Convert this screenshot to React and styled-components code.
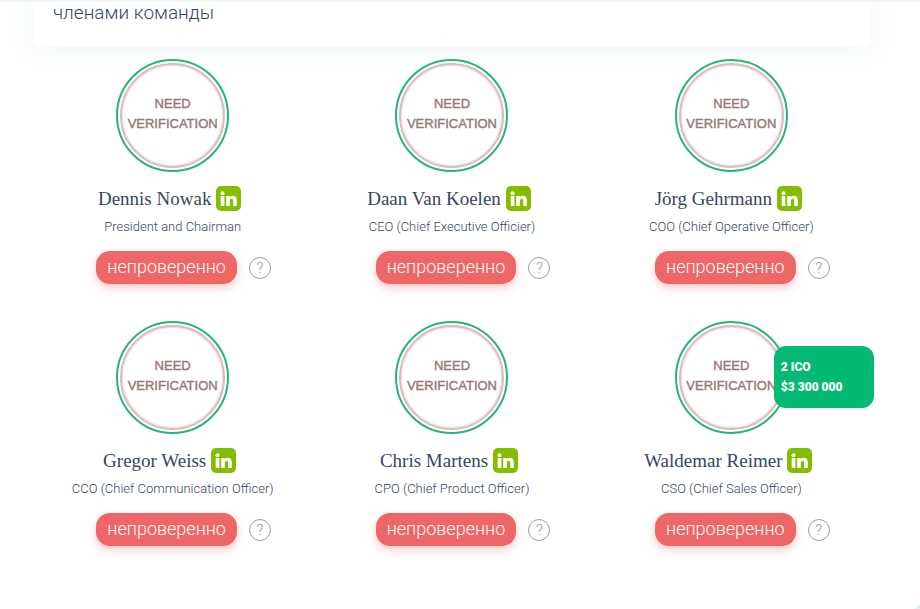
import React from "react";
import styled, { createGlobalStyle } from "styled-components";

const GlobalStyle = createGlobalStyle`
  *, *::before, *::after { box-sizing: border-box; }
  body {
    margin: 0;
    background: #fff;
    color: #36475f;
    font-family: Roboto, "Liberation Sans", sans-serif;
    font-weight: 300;
    overflow-x: hidden;
  }
`;

const Page = styled.div`
  position: relative;
  min-height: 100vh;
  overflow: hidden;
`;

const TopBar = styled.header`
  position: relative;
  z-index: 1;
  height: 2px;
  background: #eff6fa;
`;

const Content = styled.main`
  padding: 0 49px 0 33px;
`;

const IntroCard = styled.section`
  padding: 0 20px 23px;
  border-radius: 0 0 10px 10px;
  background: #fff;
  box-shadow: 0 0 28px rgba(72, 140, 180, 0.09);
`;

const IntroText = styled.p`
  margin: 0;
  font-size: 19px;
  line-height: 22px;
`;

const TeamGrid = styled.ul`
  display: grid;
  grid-template-columns: repeat(3, 1fr);
  row-gap: 37px;
  margin: 0;
  padding: 12px 0 0;
  list-style: none;
`;

const Member = styled.li`
  display: flex;
  flex-direction: column;
  align-items: center;
`;

const AvatarWrap = styled.div`
  position: relative;
  width: 113px;
  height: 113px;
`;

const Avatar = styled.div`
  height: 100%;
  border: 2px solid #27b67a;
  border-radius: 50%;
  padding: 2px;
`;

const Seal = styled.div`
  display: flex;
  flex-direction: column;
  align-items: center;
  justify-content: center;
  width: 100%;
  height: 100%;
  padding-bottom: 3px;
  border: 2px solid #dfbaba;
  border-radius: 50%;
  box-shadow: inset 0 0 1px 1px #f0dede;
  color: #967878;
  font: 400 13px/20px "Liberation Sans", Arial, sans-serif;
  -webkit-text-stroke: 0.4px #967878;
  white-space: nowrap;
`;

const StatsBadge = styled.div`
  position: absolute;
  top: 25px;
  left: 99px;
  width: 100px;
  padding: 11px 7px;
  border-radius: 12px;
  background: #04b971;
  color: #fff;
  font-size: 12px;
  font-weight: 900;
  line-height: 20px;
  white-space: nowrap;
`;

const NameRow = styled.div`
  display: flex;
  align-items: center;
  gap: 5px;
  margin-top: 14px;
  padding-right: 6px;
`;

const Name = styled.h3`
  margin: 0;
  font: 400 19px/25px "Liberation Serif", "Times New Roman", serif;
`;

const ProfileLink = styled.a`
  display: block;
  width: 25px;
  height: 25px;

  svg { display: block; }
`;

const Role = styled.p`
  margin: 8px 0 0;
  font-size: 13px;
  line-height: 16px;
`;

const StatusRow = styled.div`
  display: flex;
  align-items: center;
  gap: 12px;
  margin-top: 16px;
  padding-left: 22px;
`;

const Status = styled.span`
  padding: 0 11px 1px;
  border-radius: 14px;
  background: #ef6666;
  box-shadow: 0 4px 8px rgba(239, 102, 102, 0.35);
  color: #fff;
  font-size: 18px;
  line-height: 32px;
`;

const HelpButton = styled.button`
  display: flex;
  align-items: center;
  justify-content: center;
  width: 22px;
  height: 22px;
  padding: 0;
  border: 1px solid #98a0ac;
  border-radius: 50%;
  background: none;
  color: #8d96a3;
  font: 300 15px/20px Roboto, sans-serif;
  cursor: pointer;
`;

const CornerMark = styled.svg`
  position: absolute;
  right: 0;
  bottom: 0;
`;

const members = [
  { name: "Dennis Nowak", role: "President and Chairman" },
  { name: "Daan Van Koelen", role: "CEO (Chief Executive Officier)" },
  { name: "Jörg Gehrmann", role: "COO (Chief Operative Officer)" },
  { name: "Gregor Weiss", role: "CCO (Chief Communication Officer)" },
  { name: "Chris Martens", role: "CPO (Chief Product Officer)" },
  {
    name: "Waldemar Reimer",
    role: "CSO (Chief Sales Officer)",
    stats: ["2 ICO", "$3 300 000"],
  },
];

function LinkedInIcon() {
  return (
    <svg width="25" height="25" viewBox="0 0 25 25" aria-hidden="true">
      <rect width="25" height="25" rx="5" fill="#84bd00" />
      <circle cx="6.500" cy="7.200" r="2" fill="#fff" />
      <path
        fill="#fff"
        d="M4.700 10h3.700v10H4.700zM10.200 10h3.500v1.300c.7-1 1.700-1.500 3.100-1.500 2.900 0 4 1.800 4 4.500V20h-3.600v-5c0-1.400-.4-2.200-1.500-2.200-1.300 0-1.900.9-1.900 2.300V20h-3.600z"
      />
    </svg>
  );
}

function MemberCard({ name, role, stats }) {
  return (
    <Member>
      <AvatarWrap>
        <Avatar>
          <Seal>
            <span>NEED</span>
            <span>VERIFICATION</span>
          </Seal>
        </Avatar>
        {stats && (
          <StatsBadge>
            {stats.map((line) => (
              <div key={line}>{line}</div>
            ))}
          </StatsBadge>
        )}
      </AvatarWrap>
      <NameRow>
        <Name>{name}</Name>
        <ProfileLink href="#linkedin" aria-label={`${name} – LinkedIn`}>
          <LinkedInIcon />
        </ProfileLink>
      </NameRow>
      <Role>{role}</Role>
      <StatusRow>
        <Status>непроверенно</Status>
        <HelpButton type="button">?</HelpButton>
      </StatusRow>
    </Member>
  );
}

export default function App() {
  return (
    <>
      <GlobalStyle />
      <Page>
        <TopBar />
        <Content>
          <IntroCard>
            <IntroText>членами команды</IntroText>
          </IntroCard>
          <TeamGrid>
            {members.map((member) => (
              <MemberCard key={member.name} {...member} />
            ))}
          </TeamGrid>
        </Content>
        <CornerMark width="7" height="5" viewBox="0 0 7 5" aria-hidden="true">
          <path d="M7 0v5H0C3 4 5.500 2.500 7 0z" fill="#e4f2f8" />
        </CornerMark>
      </Page>
    </>
  );
}
